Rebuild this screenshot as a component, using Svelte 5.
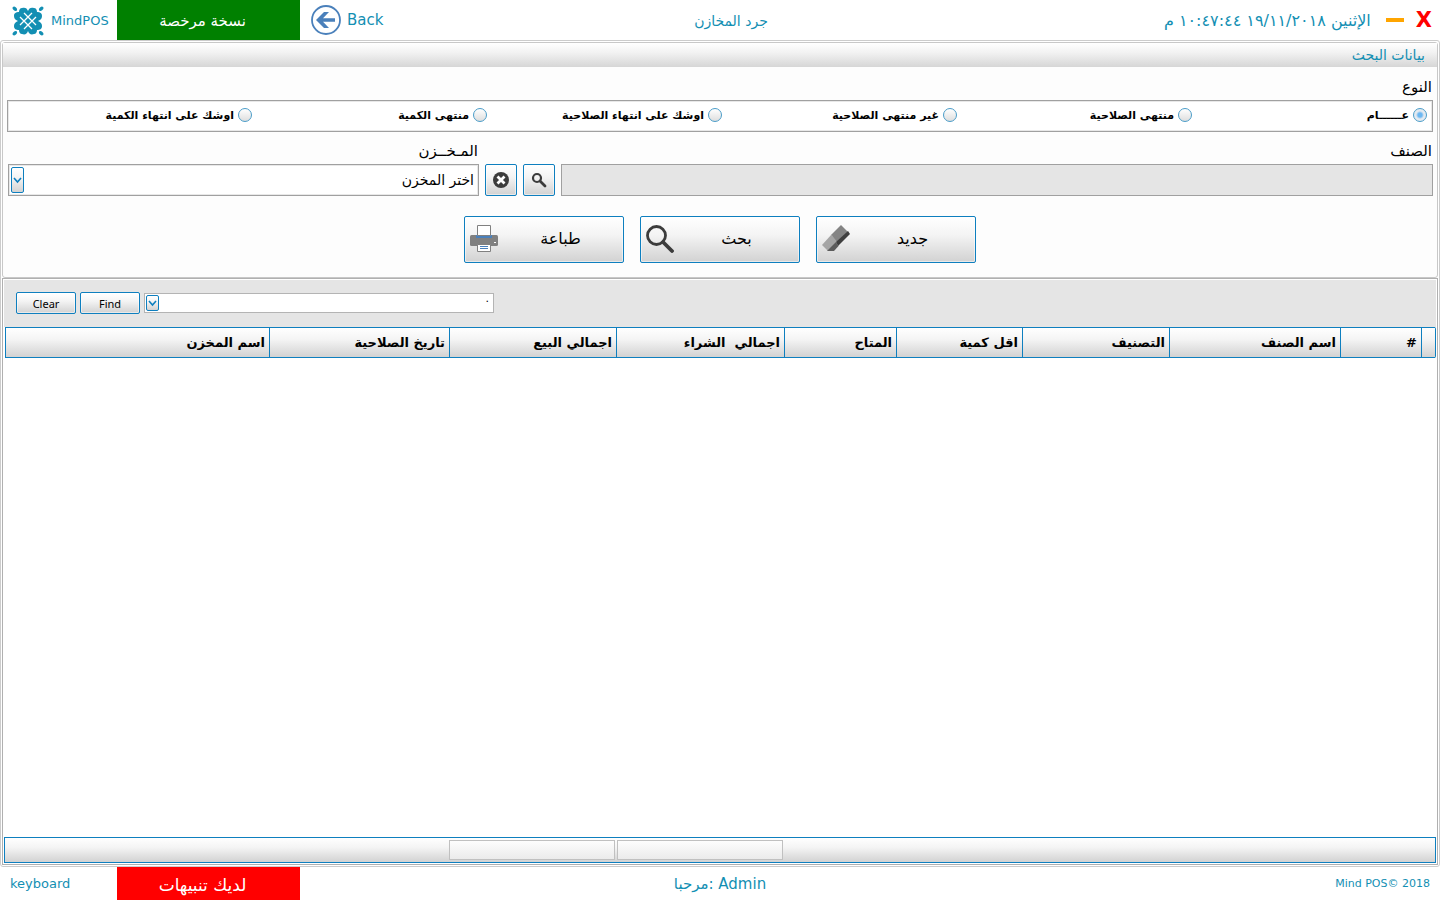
<script lang="ts">
  interface Column {
    title: string;
    width?: number;
  }

  const stockTypes = [
    'عــــــام',
    'منتهى الصلاحية',
    'غير منتهى الصلاحية',
    'اوشك على انتهاء الصلاحية',
    'منتهى الكمية',
    'اوشك على انتهاء الكمية'
  ];

  const columns: Column[] = [
    { title: '', width: 14 },
    { title: '#', width: 81 },
    { title: 'اسم الصنف', width: 171 },
    { title: 'التصنيف', width: 147 },
    { title: 'اقل كمية', width: 126 },
    { title: 'المتاح ', width: 112 },
    { title: 'اجمالي  الشراء', width: 168 },
    { title: 'اجمالي البيع', width: 167 },
    { title: 'تاريخ الصلاحية', width: 180 },
    { title: 'اسم المخزن' }
  ];

  let stockType = $state(stockTypes[0]);
  let item = $state('');
  let store = $state('');
</script>

{#snippet arrow()}
  <svg class="arrow" viewBox="0 0 11 12" aria-hidden="true">
    <path d="M2 4l3.500 4L9 4" fill="none" stroke="#0e7fbf" stroke-width="1.600" />
  </svg>
{/snippet}

<div class="page" dir="rtl">
  <header class="topbar" dir="ltr">
    <div class="start">
      <div class="brand">
        <svg class="logo" viewBox="0 0 32 30" aria-hidden="true">
          <g fill="#138fb3">
            <path d="M10 2c3-1 5 0 6 3 1-3 3-4 6-3 2 0 3 2 3 4 3 0 5 1 5 4 0 2-1 4-4 5 3 1 4 3 4 5 0 3-2 4-5 4 0 2-1 4-3 4-3 1-5 0-6-3-1 3-3 4-6 3-2 0-3-2-3-4-3 0-5-1-5-4 0-2 1-4 4-5-3-1-4-3-4-5 0-3 2-4 5-4 0-2 1-4 3-4z" />
            <ellipse cx="2.800" cy="2.800" rx="2.600" ry="1.700" transform="rotate(45 2.800 2.800)" />
            <ellipse cx="29.200" cy="2.800" rx="2.600" ry="1.700" transform="rotate(-45 29.200 2.800)" />
            <ellipse cx="2.800" cy="27.200" rx="2.600" ry="1.700" transform="rotate(-45 2.800 27.200)" />
            <ellipse cx="29.200" cy="27.200" rx="2.600" ry="1.700" transform="rotate(45 29.200 27.200)" />
          </g>
          <path d="M8 11l12 12M12 7l12 12M8 19L20 7M12 23l12-12" fill="none" stroke="#fff" stroke-width="1.300" />
        </svg>
        <span>MindPOS</span>
      </div>
      <div class="licence" dir="rtl">نسخة مرخصة</div>
      <button class="back">
        <svg viewBox="0 0 30 30" aria-hidden="true">
          <circle cx="15" cy="15" r="14" fill="none" stroke="#4a80bb" stroke-width="1.800" />
          <path d="M5 15l8-8h5l-6 6.200h12v3.600H12l6 6.200h-5z" fill="#4a80bb" />
        </svg>
        <span>Back</span>
      </button>
    </div>
    <h1>جرد المخازن</h1>
    <div class="end">
      <time dir="rtl">الإثنين ١٩/١١/٢٠١٨ ١٠:٤٧:٤٤ م</time>
      <button class="minimize" aria-label="تصغير"></button>
      <button class="close">X</button>
    </div>
  </header>

  <main>
    <section class="criteria">
      <h2>بيانات البحث</h2>
      <form onsubmit={(e) => e.preventDefault()}>
        <fieldset>
          <legend>النوع</legend>
          <div class="types">
            {#each stockTypes as type}
              <label>
                <input type="radio" name="type" value={type} bind:group={stockType} />
                <span>{type}</span>
              </label>
            {/each}
          </div>
        </fieldset>

        <div class="fields">
          <label class="item-label" for="item">الصنف</label>
          <label class="store-label" for="store">المـخــزن</label>
          <input id="item" type="text" bind:value={item} disabled />
          <button type="button" class="square" aria-label="بحث عن صنف">
            <svg width="16" height="16" viewBox="0 0 16 16" aria-hidden="true">
              <circle cx="6" cy="6" r="4" fill="none" stroke="#3c3c3c" stroke-width="2.200" />
              <path d="M9 9l5 5" stroke="#3c3c3c" stroke-width="2.800" stroke-linecap="round" />
            </svg>
          </button>
          <button type="button" class="square" aria-label="مسح الصنف">
            <svg width="16" height="16" viewBox="0 0 16 16" aria-hidden="true">
              <circle cx="8" cy="8" r="8" fill="#3c3c3c" />
              <path d="M4.500 4.500l7 7M11.500 4.500l-7 7" stroke="#fff" stroke-width="2.800" />
            </svg>
          </button>
          <div class="combo">
            <select id="store" bind:value={store}>
              <option value="">اختر المخزن</option>
            </select>
            {@render arrow()}
          </div>
        </div>

        <div class="actions">
          <button type="reset">
            <span>جديد</span>
            <svg viewBox="0 0 28 28" aria-hidden="true">
              <path d="M19 0l7 7-11 11-6-8z" fill="#848484" />
              <path d="M9.500 9.500L0 20l6 6 9-9z" fill="#a5a5a5" />
              <path d="M26 6l2 3-12 12-2-4z" fill="#3f3f3f" />
              <path d="M14 17l2.500 4-4.500 5H5z" fill="#5c5c5c" />
            </svg>
          </button>
          <button type="submit">
            <span>بحث</span>
            <svg viewBox="0 0 28 28" aria-hidden="true">
              <circle cx="10.500" cy="10.500" r="9" fill="none" stroke="#3c3c3c" stroke-width="2.800" />
              <path d="M17 17l9 9" stroke="#3c3c3c" stroke-width="3.800" stroke-linecap="round" />
            </svg>
          </button>
          <button type="button">
            <span>طباعة</span>
            <svg viewBox="0 0 28 28" aria-hidden="true">
              <rect y="10" width="28" height="11" rx="1.500" fill="#808080" />
              <path d="M6 10h16v3H6z" fill="#4a80bb" />
              <path d="M7.500.500h13v10h-13z" fill="#fff" stroke="#808080" />
              <path d="M7.500 19.500h13v7h-13z" fill="#fff" stroke="#808080" />
              <path d="M10 21.500h8M10 23.500h8" stroke="#4a80bb" />
              <path d="M24 17.500h2" stroke="#fff" />
            </svg>
          </button>
        </div>
      </form>
    </section>

    <section class="results">
      <div class="finder" dir="ltr">
        <button>Clear</button>
        <button>Find</button>
        <div class="combo small" dir="rtl">
          <select aria-label="Find">
            <option>.</option>
          </select>
          {@render arrow()}
        </div>
      </div>

      <table>
        <colgroup>
          {#each columns as column}
            <col style:width={column.width ? `${column.width}px` : null} />
          {/each}
        </colgroup>
        <thead>
          <tr>
            {#each columns as column}
              <th scope="col">{column.title}</th>
            {/each}
          </tr>
        </thead>
        <tbody></tbody>
      </table>

      <div class="totals">
        <output aria-label="اجمالي الشراء"></output>
        <output aria-label="اجمالي البيع"></output>
      </div>
    </section>
  </main>

  <footer class="bottombar" dir="ltr">
    <div class="start">
      <button class="keyboard">keyboard</button>
      <button class="alerts" dir="rtl">لديك تنبيهات</button>
    </div>
    <div class="welcome">مرحبا: Admin</div>
    <div class="copyright">Mind POS© 2018</div>
  </footer>
</div>

<style>
  :global(body) {
    margin: 0;
    background: #fff;
  }

  .page {
    --teal: #138fb3;
    --blue: #0e7fbf;
    --shade: linear-gradient(#fff, #f4f4f4 40%, #d2d2d2);
    display: flex;
    flex-direction: column;
    min-height: 100vh;
    font-family: "DejaVu Sans", sans-serif;
    font-size: 14px;
    color: #000;
  }

  .page * {
    box-sizing: border-box;
  }

  button,
  input,
  select {
    margin: 0;
    font: inherit;
    color: inherit;
  }

  button {
    padding: 0;
    border: 0;
    background: none;
  }

  h1,
  h2 {
    margin: 0;
    font-size: 14px;
    font-weight: normal;
    color: var(--teal);
  }

  .topbar,
  .bottombar {
    display: grid;
    grid-template-columns: 1fr auto 1fr;
    align-items: center;
    color: var(--teal);
  }

  .topbar {
    height: 40px;
  }

  .topbar h1 {
    margin-left: 22px;
    padding-top: 2px;
  }

  .start {
    display: flex;
    align-items: center;
    height: 100%;
  }

  .brand {
    display: flex;
    align-items: center;
    gap: 7px;
    width: 117px;
    padding: 1px 0 0 12px;
    font-size: 13px;
  }

  .logo {
    flex: none;
    width: 32px;
    height: 30px;
  }

  .licence,
  .alerts {
    display: flex;
    align-items: center;
    justify-content: center;
    width: 183px;
    height: 100%;
    padding: 2px 12px 0 0;
    font-size: 15px;
    color: #fff;
    background: #008000;
  }

  .back {
    display: flex;
    align-items: center;
    gap: 6px;
    margin-left: 11px;
    font-size: 15px;
  }

  .back svg {
    width: 30px;
    height: 30px;
  }

  .end {
    display: flex;
    align-items: center;
    justify-content: flex-end;
    padding-right: 8px;
    font-size: 16px;
  }

  .minimize {
    width: 18px;
    height: 4px;
    margin: 0 12px 0 15px;
    background: orange;
  }

  .close {
    font-size: 21px;
    font-weight: bold;
    line-height: 24px;
    color: #f00;
  }

  main {
    flex: 1;
    display: flex;
    flex-direction: column;
    padding: 1px;
    border: 1px solid #ccc;
    border-radius: 3px;
  }

  .criteria {
    border: 1px solid #c8c8c8;
    border-radius: 3px;
    background: #fdfdfd;
  }

  h2 {
    height: 24px;
    padding: 0 12px;
    line-height: 24px;
    background: linear-gradient(#fff, #f2f2f2 40%, #d6d6d6);
  }

  form {
    padding: 10px 4px 14px;
  }

  fieldset {
    min-width: 0;
    margin: 0;
    padding: 0;
    border: 0;
  }

  legend,
  .fields label {
    padding: 0 1px;
    font-size: 15px;
    line-height: 20px;
  }

  legend {
    margin-bottom: 3px;
  }

  .types {
    display: grid;
    grid-template-columns: repeat(6, 1fr);
    align-items: center;
    height: 32px;
    padding: 0 5px 2px 9px;
    border: 1px solid #a0a0a0;
    background: #fff;
    box-shadow: inset 0 0 0 1px #e8e8e8;
  }

  .types label {
    display: flex;
    align-items: center;
    gap: 4px;
    font-size: 11px;
    font-weight: bold;
    white-space: nowrap;
  }

  input[type="radio"] {
    appearance: none;
    flex: none;
    width: 14px;
    height: 14px;
    border: 1px solid #4a9cc8;
    border-radius: 50%;
    background: linear-gradient(#fff, #dedede);
  }

  input[type="radio"]:checked {
    background: radial-gradient(circle, #6db8f2 0 2px, #e4eaf0 4px);
  }

  .fields {
    display: grid;
    grid-template-columns: 872fr 32px 32px 471fr;
    column-gap: 6px;
    row-gap: 3px;
    margin-top: 9px;
    padding-left: 1px;
  }

  .store-label {
    grid-column: 4;
  }

  #item {
    width: 100%;
    height: 32px;
    border: 1px solid #a0a0a0;
    border-radius: 0;
    background: #e5e5e5;
  }

  .square,
  .actions button,
  .finder button {
    border: 1px solid var(--blue);
    border-radius: 2px;
    background: var(--shade);
    box-shadow: inset 0 0 0 1px rgba(255, 255, 255, 0.5);
  }

  .square {
    display: flex;
    align-items: center;
    justify-content: center;
    height: 32px;
  }

  .combo {
    position: relative;
    height: 32px;
  }

  .combo select {
    display: block;
    appearance: none;
    width: 100%;
    height: 100%;
    padding: 0 4px 0 18px;
    border: 1px solid #a0a0a0;
    border-radius: 0;
    background: #fff;
    box-shadow: inset 0 0 0 1px #e8e8e8;
    font-size: 14px;
  }

  .arrow {
    position: absolute;
    top: 3px;
    left: 3px;
    width: 13px;
    height: calc(100% - 6px);
    border: 1px solid var(--blue);
    border-radius: 2px;
    background: var(--shade);
    pointer-events: none;
  }

  .actions {
    display: flex;
    justify-content: center;
    gap: 16px;
    margin-top: 20px;
  }

  .actions button {
    display: flex;
    align-items: center;
    width: 160px;
    height: 47px;
    padding: 0 0 2px 5px;
    font-size: 16px;
  }

  .actions span {
    flex: 1;
    text-align: center;
  }

  .actions svg {
    width: 28px;
    height: 28px;
  }

  .results {
    flex: 1;
    display: flex;
    flex-direction: column;
    padding: 1px;
    border: 1px solid #b0b0b0;
  }

  .finder {
    display: flex;
    align-items: center;
    gap: 4px;
    height: 47px;
    padding: 0 0 1px 12px;
    background: #e5e5e5;
  }

  .finder button {
    width: 60px;
    height: 22px;
    font-family: "Noto Sans", sans-serif;
    font-size: 11px;
  }

  .small {
    width: 350px;
    height: 20px;
  }

  .small select {
    padding-bottom: 10px;
    border-color: #b4b4b4;
    font-size: 11px;
    line-height: 10px;
    box-shadow: none;
  }

  .small .arrow {
    top: 2px;
    left: 2px;
    height: 16px;
  }

  table {
    width: calc(100% - 1px);
    margin-left: 1px;
    table-layout: fixed;
    border-collapse: separate;
    border-spacing: 0;
    border-right: 1px solid var(--blue);
    border-radius: 2px;
  }

  th {
    height: 31px;
    padding: 0 4px;
    border: solid var(--blue);
    border-width: 1px 0 1px 1px;
    background: var(--shade);
    text-align: start;
    font-weight: bold;
    font-size: 13px;
    line-height: 20px;
    white-space: pre;
  }

  .totals {
    display: flex;
    gap: 2px;
    height: 26px;
    margin-top: auto;
    padding: 2px 652px 2px 2px;
    border: 1px solid var(--blue);
    background: var(--shade);
  }

  .totals output {
    width: 166px;
    height: 20px;
    border: 1px solid #c0c0c0;
    background: linear-gradient(#fdfdfd, #ebebeb);
  }

  .bottombar {
    height: 33px;
  }

  .keyboard {
    width: 117px;
    padding-left: 10px;
    text-align: left;
    font-size: 13px;
  }

  .alerts {
    font-size: 17px;
    background: #f00;
  }

  .welcome {
    font-size: 15px;
  }

  .copyright {
    padding-right: 10px;
    text-align: right;
    font-size: 11px;
  }
</style>
